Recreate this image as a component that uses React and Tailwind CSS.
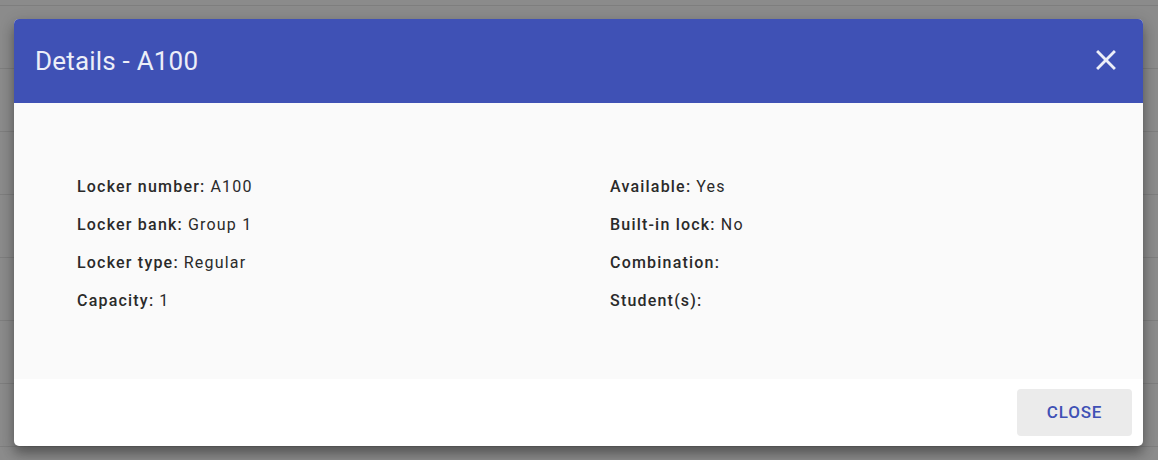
import React from "react";

const leftRows = [
  ["Locker number:", "A100"],
  ["Locker bank:", "Group 1"],
  ["Locker type:", "Regular"],
  ["Capacity:", "1"],
];

const rightRows = [
  ["Available:", "Yes"],
  ["Built-in lock:", "No"],
  ["Combination:", ""],
  ["Student(s):", ""],
];

function DetailRow({ label, value }) {
  return (
    <div className="flex h-[38px] items-center text-[16px] tracking-[1.2px] text-[#2a2a2a]">
      <span className="font-medium">{label}</span>
      {value ? <span className="ml-[5px] font-normal">{value}</span> : null}
    </div>
  );
}

export default function App() {
  return (
    <div
      className="relative h-[460px] w-full overflow-hidden bg-[#8b8b8b]"
      style={{ fontFamily: "Roboto, 'Noto Sans', sans-serif" }}
    >
      {/* dimmed table behind the dialog */}
      <div className="flex flex-col">
        <div className="h-[6px] border-b border-[#7e7e7e]" />
        {Array.from({ length: 7 }).map((_, i) => (
          <div key={i} className="h-[63px] border-b border-[#7e7e7e]" />
        ))}
      </div>

      <div className="absolute left-[14px] top-[19px] flex w-[1129px] flex-col overflow-hidden rounded-[5px] bg-white shadow-[0_8px_12px_rgba(0,0,0,0.3),0_3px_16px_rgba(0,0,0,0.15)]">
        <div className="flex h-[84px] items-center justify-between bg-[#3f51b5] pl-[21px] pr-[21px]">
          <h1 className="text-[26px] font-normal tracking-[0.2px] text-[#eceef8]">Details - A100</h1>
          <button type="button" className="flex h-[34px] w-[34px] translate-x-[1px] -translate-y-[1px] items-center justify-center text-[#eceef8]">
            <svg viewBox="0 0 24 24" className="h-[34px] w-[34px]" fill="currentColor">
              <path d="M19 6.41L17.59 5 12 10.59 6.41 5 5 6.41 10.59 12 5 17.59 6.41 19 12 13.41 17.59 19 19 17.59 13.41 12z" />
            </svg>
          </button>
        </div>

        <div className="grid h-[276px] grid-cols-[533px_1fr] bg-[#fafafa] pl-[63px] pt-[65px]">
          <div>
            {leftRows.map(([label, value]) => (
              <DetailRow key={label} label={label} value={value} />
            ))}
          </div>
          <div>
            {rightRows.map(([label, value]) => (
              <DetailRow key={label} label={label} value={value} />
            ))}
          </div>
        </div>

        <div className="flex h-[67px] items-center justify-end pr-[11px]">
          <button
            type="button"
            className="h-[47px] w-[115px] rounded-[4px] bg-[#ebebeb] text-[17px] font-medium tracking-[0.8px] text-[#3f51b5]"
          >
            CLOSE
          </button>
        </div>
      </div>
    </div>
  );
}
